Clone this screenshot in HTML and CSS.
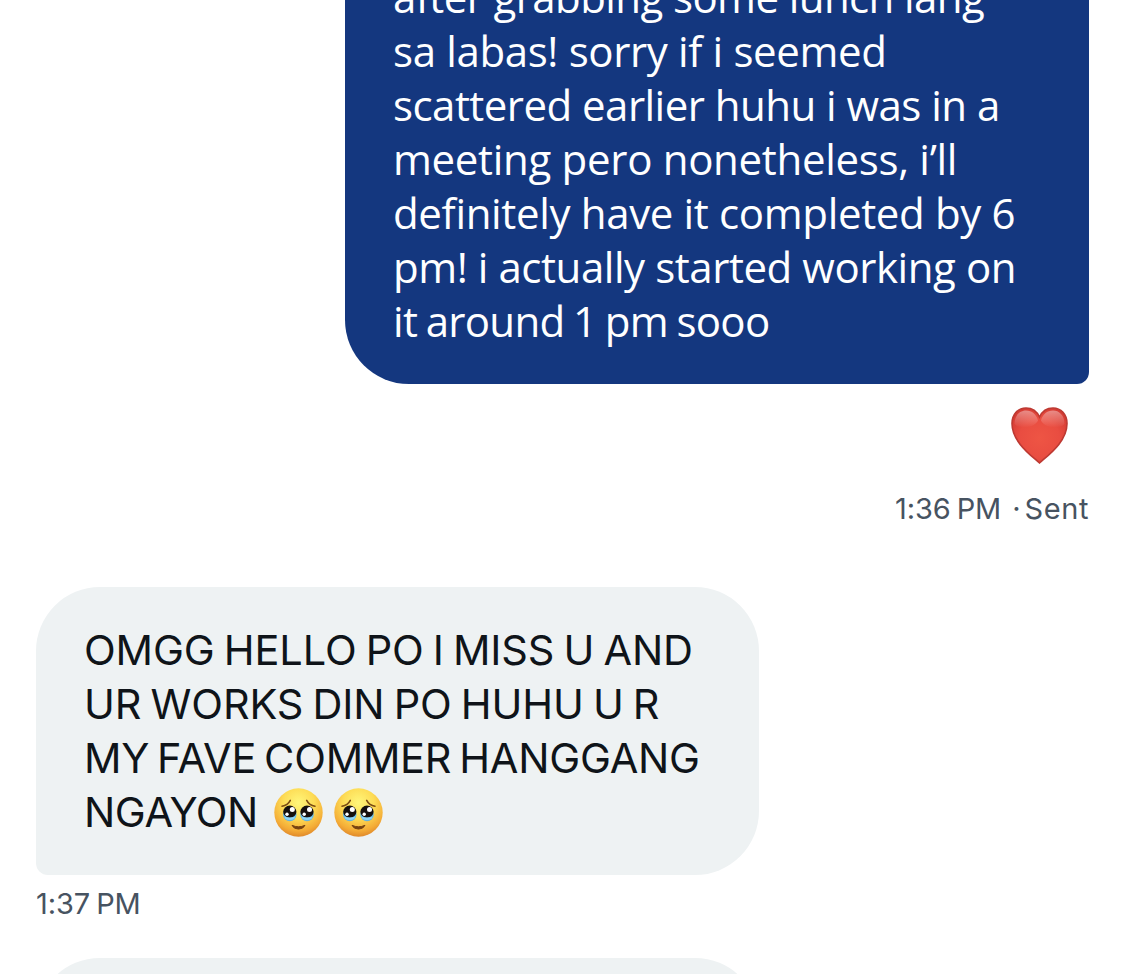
FILE: index.html
```html
<!DOCTYPE html>
<html lang="en">
<head>
  <meta charset="UTF-8">
  <meta name="viewport" content="width=device-width, initial-scale=1.0">
  <title>Messages</title>
  <link rel="stylesheet" href="styles.css">
</head>
<body>
  <svg class="defs" width="0" height="0" aria-hidden="true">
    <defs>
      <radialGradient id="heartFill" cx="0.5" cy="0.55" r="0.6">
        <stop offset="0" stop-color="#ee5544"/>
        <stop offset="0.6" stop-color="#e94d41"/>
        <stop offset="1" stop-color="#d63c34"/>
      </radialGradient>
      <linearGradient id="heartShine" x1="0" y1="0" x2="0" y2="1">
        <stop offset="0" stop-color="#fff" stop-opacity="0.4"/>
        <stop offset="1" stop-color="#fff" stop-opacity="0"/>
      </linearGradient>
      <radialGradient id="faceFill" cx="0.5" cy="0.3" r="0.72">
        <stop offset="0" stop-color="#fff67a"/>
        <stop offset="0.45" stop-color="#fddc55"/>
        <stop offset="0.8" stop-color="#f4ac36"/>
        <stop offset="1" stop-color="#dd8429"/>
      </radialGradient>
      <symbol id="face" viewBox="0 0 49 49">
        <circle cx="24.5" cy="24.5" r="24.2" fill="url(#faceFill)"/>
        <path d="M8 18.2c3.6-.5 6.6-2.4 8.3-5.8M41 18.2c-3.6-.5-6.6-2.4-8.3-5.8" fill="none" stroke="#7a4a12" stroke-width="1.6" stroke-linecap="round"/>
        <ellipse cx="15.8" cy="26.5" rx="6.7" ry="6.8" fill="#62b5e3"/>
        <ellipse cx="33" cy="26.5" rx="6.7" ry="6.8" fill="#62b5e3"/>
        <ellipse cx="15.8" cy="23.7" rx="6.6" ry="6.1" fill="#15100e"/>
        <ellipse cx="33" cy="23.7" rx="6.6" ry="6.1" fill="#15100e"/>
        <path d="M10.2 28.5q5.6 2.2 11.2 0l-1 2.3q-4.6 2.6-9.2 0zM27.4 28.5q5.6 2.2 11.2 0l-1 2.3q-4.6 2.6-9.2 0z" fill="#8ed4f4"/>
        <circle cx="18.3" cy="21.4" r="2.5" fill="#fff"/>
        <circle cx="35.5" cy="21.4" r="2.5" fill="#fff"/>
        <circle cx="13" cy="26.2" r="1.7" fill="#fff"/>
        <circle cx="30.2" cy="26.2" r="1.7" fill="#fff"/>
        <path d="M18 37.3q6.5 3 13 0q-1.7 3.8-6.5 3.8t-6.5-3.800z" fill="#774310" stroke="#774310" stroke-linejoin="round"/>
      </symbol>
    </defs>
  </svg>

  <main class="thread">
    <div class="message sent">
      <div class="bubble">
        <span class="line l1">after grabbing some lunch lang</span>
        <span class="line l2">sa labas! sorry if i seemed</span>
        <span class="line l3">scattered earlier huhu i was in a</span>
        <span class="line l4">meeting pero nonetheless, i’ll</span>
        <span class="line l5">definitely have it completed by 6</span>
        <span class="line l6">pm! i actually started working on</span>
        <span class="line l7">it around 1 pm sooo</span>
      </div>
      <svg class="heart" viewBox="0 0 57 57" role="img" aria-label="Heart">
        <path d="M28.500 56C19 47.500 1 34.500 1 16.500C1 7.500 7 1 15 1c6 0 11 3.500 13.500 9C31 4.500 36 1 42 1c8 0 14 6.500 14 15.500C56 34.500 38 47.500 28.500 56z" fill="url(#heartFill)" stroke="#bd3932" stroke-width="1.600"/>
        <path d="M3.500 17C3.500 8 9 3.500 15 3.500s10.500 4 12 10c-4 8-19 9-23.500 3.500zM30 13.500c1.500-6 6-10 12-10s11.500 4.500 11.500 13.500c-4.500 5.500-19.500 4.500-23.500-3.500z" fill="url(#heartShine)"/>
      </svg>
      <div class="meta"><span>1:36 PM</span><span class="dot">·</span><span class="status">Sent</span></div>
    </div>

    <div class="message received">
      <div class="bubble">
        <span class="line r1">OMGG HELLO PO I MISS U AND</span>
        <span class="line r2">UR WORKS DIN PO HUHU U R</span>
        <span class="line r3">MY FAVE COMMER HANGGANG</span>
        <span class="line r4">NGAYON <svg class="emoji"><use href="#face"/></svg><svg class="emoji"><use href="#face"/></svg></span>
      </div>
      <div class="meta">1:37 PM</div>
    </div>

    <div class="message received">
      <div class="bubble"></div>
    </div>
  </main>
</body>
</html>
```
FILE: styles.css
```css
body {
  margin: 0;
  background: #fff;
  font-family: "Open Sans", "Noto Sans", sans-serif;
}

.defs {
  display: block;
}

.thread {
  display: flex;
  flex-direction: column;
  box-sizing: border-box;
  height: 974px;
  padding: 0 36px;
  overflow: hidden;
}

.message {
  display: flex;
  flex-direction: column;
  flex-shrink: 0;
}

.bubble {
  box-sizing: border-box;
  font-size: 42px;
  line-height: 54px;
}

.line {
  display: block;
  white-space: nowrap;
}

.sent {
  align-items: flex-end;
  margin-top: -30px;
}

.sent .bubble {
  width: 744px;
  height: 414px;
  padding: 0 48px;
  border-radius: 0 0 12px 64px;
  background: #14377f;
  color: #fff;
}

/* per-line tracking */
.l1 { letter-spacing: -0.59px; }
.l2 { letter-spacing: -0.36px; }
.l3 { letter-spacing: -0.53px; }
.l4 { letter-spacing: -0.31px; }
.l5 { letter-spacing: -0.34px; }
.l6 { letter-spacing: -0.44px; }
.l7 { letter-spacing: -0.7px; word-spacing: -1.7px; }

.heart {
  width: 57px;
  height: 57px;
  margin: 23px 21px 0 0;
}

.meta {
  display: flex;
  height: 40px;
  line-height: 40px;
  font-family: Inter, "Noto Sans", sans-serif;
  font-size: 29px;
  letter-spacing: -0.1px;
  word-spacing: -2px;
  color: #475361;
}

.sent .meta {
  margin-top: 25px;
}

.dot {
  margin: 0 4px 0 11px;
}

.status {
  letter-spacing: 0.6px;
}

.received {
  align-items: flex-start;
}

.sent + .received {
  margin-top: 58px;
}

.received .bubble {
  width: 723px;
  height: 288px;
  padding: 36px 48px;
  border-radius: 64px 64px 64px 12px;
  background: #eef2f3;
  color: #0f1419;
  font-family: Inter, "Noto Sans", sans-serif;
  font-size: 41.5px;
}

.r1,
.r2 {
  letter-spacing: -0.12px;
  word-spacing: -2.4px;
}

.r3 {
  letter-spacing: -0.25px;
  word-spacing: -3.5px;
}

.r4 {
  letter-spacing: -0.45px;
  word-spacing: 5px;
}

.received .meta {
  margin-top: 9px;
}

.received + .received {
  margin-top: 34px;
}

.emoji {
  width: 49px;
  height: 49px;
  margin-right: 11px;
  vertical-align: -10px;
}
```
